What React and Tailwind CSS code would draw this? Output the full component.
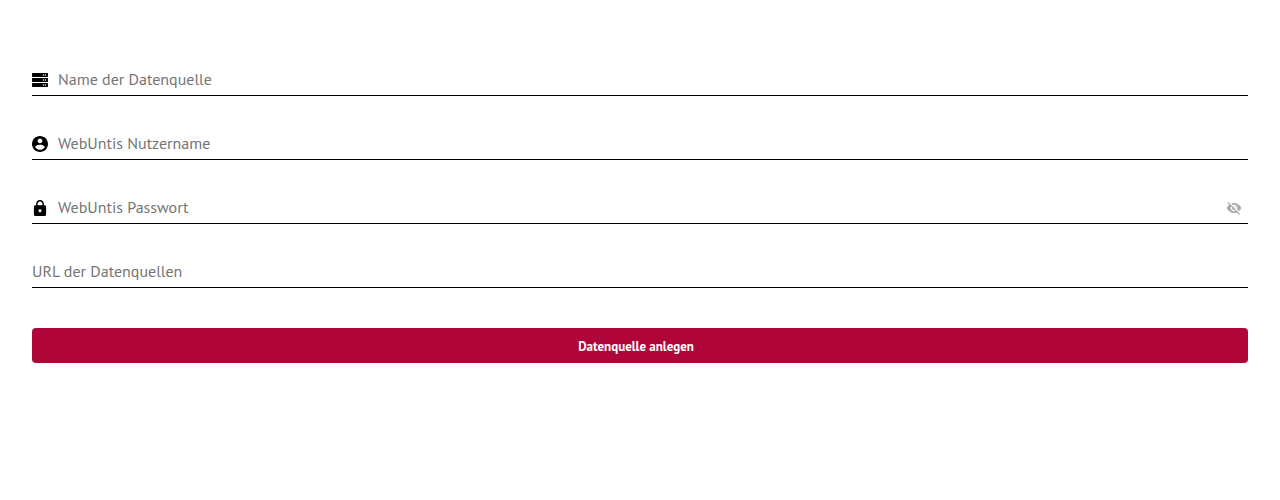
import { FaServer } from "react-icons/fa";

function AccountIcon() {
  return (
    <svg viewBox="2 2 20 20" className="size-4 shrink-0" fill="currentColor" aria-hidden="true">
      <path d="M12 2C6.48 2 2 6.48 2 12s4.48 10 10 10 10-4.48 10-10S17.52 2 12 2zm0 3c1.66 0 3 1.34 3 3s-1.34 3-3 3-3-1.34-3-3 1.34-3 3-3zm0 14.2c-2.5 0-4.71-1.28-6-3.22.03-1.99 4-3.08 6-3.08 1.99 0 5.97 1.09 6 3.08-1.29 1.94-3.5 3.22-6 3.22z" />
    </svg>
  );
}

function LockIcon() {
  return (
    <svg viewBox="1.5 1 21 21" className="size-4 shrink-0" fill="currentColor" aria-hidden="true">
      <path d="M18 8h-1V6c0-2.76-2.24-5-5-5S7 3.24 7 6v2H6c-1.1 0-2 .9-2 2v10c0 1.1.9 2 2 2h12c1.1 0 2-.9 2-2V10c0-1.1-.9-2-2-2zm-6 9c-1.1 0-2-.9-2-2s.9-2 2-2 2 .9 2 2-.9 2-2 2zm3.1-9H8.9V6c0-1.71 1.39-3.1 3.1-3.1 1.71 0 3.1 1.39 3.1 3.1v2z" />
    </svg>
  );
}

function HiddenIcon() {
  return (
    <svg viewBox="0 0 24 24" className="size-4" fill="currentColor" aria-hidden="true">
      <path d="M12 7c2.76 0 5 2.24 5 5 0 .65-.13 1.26-.36 1.83l2.92 2.92c1.51-1.26 2.7-2.89 3.43-4.75-1.73-4.39-6-7.5-11-7.5-1.4 0-2.74.25-3.98.7l2.16 2.16C10.74 7.13 11.35 7 12 7zM2 4.27l2.28 2.28.46.46C3.08 8.3 1.78 10.02 1 12c1.73 4.39 6 7.5 11 7.5 1.55 0 3.03-.3 4.38-.84l.42.42L19.73 22 21 20.73 3.27 3 2 4.27zM7.53 9.8l1.55 1.55c-.05.21-.08.43-.08.65 0 1.66 1.34 3 3 3 .22 0 .44-.03.65-.08l1.55 1.55c-.67.33-1.41.53-2.2.53-2.76 0-5-2.24-5-5 0-.79.2-1.53.53-2.2zm4.31-.78l3.15 3.15.02-.16c0-1.66-1.34-3-3-3l-.17.01z" />
    </svg>
  );
}

function Field({ id, label, type = "text", icon, action }) {
  return (
    <div className="flex h-8 items-center gap-2.5 border-b border-black focus-within:border-[#b00538]">
      {icon && (
        <label htmlFor={id} className="shrink-0">
          {icon}
        </label>
      )}
      <input
        id={id}
        type={type}
        placeholder={label}
        aria-label={label}
        className="h-full min-w-0 flex-1 bg-transparent pb-0.5 text-base text-black outline-none placeholder:text-[#757575]"
      />
      {action}
    </div>
  );
}

export default function App() {
  return (
    <form
      onSubmit={(event) => event.preventDefault()}
      className="flex flex-col gap-8 bg-white px-8 pt-16 font-['PT_Sans','Noto_Sans',sans-serif]"
    >
      <Field id="source-name" label="Name der Datenquelle" icon={<FaServer className="size-4" />} />
      <Field id="username" label="WebUntis Nutzername" icon={<AccountIcon />} />
      <Field
        id="password"
        type="password"
        label="WebUntis Passwort"
        icon={<LockIcon />}
        action={
          <button type="button" aria-label="Passwort anzeigen" className="mr-1.5 text-[#aaaaaa]">
            <HiddenIcon />
          </button>
        }
      />
      <Field id="url" label="URL der Datenquellen" />
      <button
        type="submit"
        className="mt-2 flex w-full items-center justify-center rounded-sm bg-[#b00538] pt-[9px] pr-4 pb-[7px] pl-2 text-[13px] leading-[19px] font-bold text-white"
      >
        Datenquelle anlegen
      </button>
    </form>
  );
}
